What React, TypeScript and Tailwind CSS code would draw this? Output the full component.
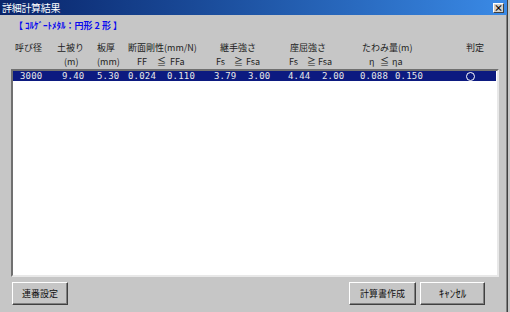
import React from 'react';

const jp = "font-['MS_UI_Gothic','Noto_Sans_CJK_JP',sans-serif]";
const mono = "font-['DejaVu_Sans_Mono','Liberation_Mono',monospace]";

function Btn({ label, className }: { label: string; className: string }) {
  return (
    <button
      className={`h-[23px] flex items-center justify-center bg-[#c6c6c6] border border-t-white border-l-white border-r-[#404040] border-b-[#404040] shadow-[inset_-1px_-1px_0_#808080] text-[9px] text-[#111] ${className}`}
    >
      {label}
    </button>
  );
}

export default function App() {
  return (
    <div className={`w-[510px] h-[312px] overflow-hidden bg-[#c6c6c6] ${jp}`}>
      <div className="w-[508px] h-full flex flex-col border-r border-r-[#404040] shadow-[inset_-1px_0_0_#808080]">
        {/* Title bar */}
        <div className="h-[15px] shrink-0 flex items-center justify-between pl-[2px] pr-[3px] bg-gradient-to-r from-[#0a246a] to-[#3a8ae6]">
          <span className="text-[10px] leading-[12px] text-white tracking-[-0.3px]">詳細計算結果</span>
          <span className="w-[11px] h-[10px] flex items-center justify-center bg-[#d4d0c8] border border-t-white border-l-white border-r-[#404040] border-b-[#404040] text-[9px] leading-none font-bold text-black">
            ×
          </span>
        </div>

        {/* Body */}
        <div className="flex-1 flex flex-col pl-[11px] pr-[8px]">
          <div className="mt-[5px] ml-[3px] h-[12px] leading-[12px] text-[9px] font-bold text-[#0a0aee] whitespace-pre">
            【 ｺﾙｹﾞｰﾄﾒﾀﾙ：円形 2 形 】
          </div>

          {/* Header row 1 */}
          <div className="mt-[10px] h-[12px] leading-[12px] flex pl-[4px] text-[9px] text-[#222] whitespace-nowrap">
            <span className="w-[42px] shrink-0">呼び径</span>
            <span className="w-[40px] shrink-0">土被り</span>
            <span className="w-[31px] shrink-0">板厚</span>
            <span className="w-[92px] shrink-0">断面剛性(mm/N)</span>
            <span className="w-[70px] shrink-0">継手強さ</span>
            <span className="w-[72px] shrink-0">座屈強さ</span>
            <span className="w-[104px] shrink-0">たわみ量(m)</span>
            <span>判定</span>
          </div>

          {/* Header row 2 */}
          <div className="mt-[2px] h-[12px] leading-[12px] flex pl-[53px] text-[9px] text-[#222] whitespace-nowrap">
            <span className="w-[33px] shrink-0">(m)</span>
            <span className="w-[40px] shrink-0">(mm)</span>
            <span className="w-[20px] shrink-0">FF</span>
            <span className="w-[13px] shrink-0">≦</span>
            <span className="w-[46px] shrink-0">FFa</span>
            <span className="w-[18px] shrink-0">Fs</span>
            <span className="w-[12px] shrink-0">≧</span>
            <span className="w-[43px] shrink-0">Fsa</span>
            <span className="w-[18px] shrink-0">Fs</span>
            <span className="w-[11px] shrink-0">≧</span>
            <span className="w-[51px] shrink-0">Fsa</span>
            <span className="w-[11px] shrink-0">η</span>
            <span className="w-[12px] shrink-0">≦</span>
            <span>ηa</span>
          </div>

          {/* List box */}
          <div className="mt-[1px] h-[208px] bg-white border-2 border-t-[#707070] border-l-[#707070] border-r-[#e8e8e8] border-b-[#e8e8e8]">
            <div className={`h-[10px] mr-[1px] flex items-center pl-[7px] bg-[#0c1a80] text-[#e8e8e8] text-[9px] leading-[10px] tracking-[0.2px] whitespace-nowrap ${mono}`}>
              <span className="w-[42px] shrink-0">3000</span>
              <span className="w-[35px] shrink-0">9.40</span>
              <span className="w-[31px] shrink-0">5.30</span>
              <span className="w-[39px] shrink-0">0.024</span>
              <span className="w-[47px] shrink-0">0.110</span>
              <span className="w-[34px] shrink-0">3.79</span>
              <span className="w-[40px] shrink-0">3.00</span>
              <span className="w-[34px] shrink-0">4.44</span>
              <span className="w-[38px] shrink-0">2.00</span>
              <span className="w-[35px] shrink-0">0.088</span>
              <span className="w-[71px] shrink-0">0.150</span>
              <span className="w-[9px] h-[9px] rounded-full border border-white" />
            </div>
          </div>

          {/* Buttons */}
          <div className="mt-[5px] flex items-start">
            <Btn label="連番設定" className="w-[56px] ml-[1px]" />
            <div className="flex-1" />
            <Btn label="計算書作成" className="w-[67px]" />
            <Btn label="ｷｬﾝｾﾙ" className="w-[65px] ml-[4px] mr-[14px] text-[11px]" />
          </div>
        </div>
      </div>
    </div>
  );
}
